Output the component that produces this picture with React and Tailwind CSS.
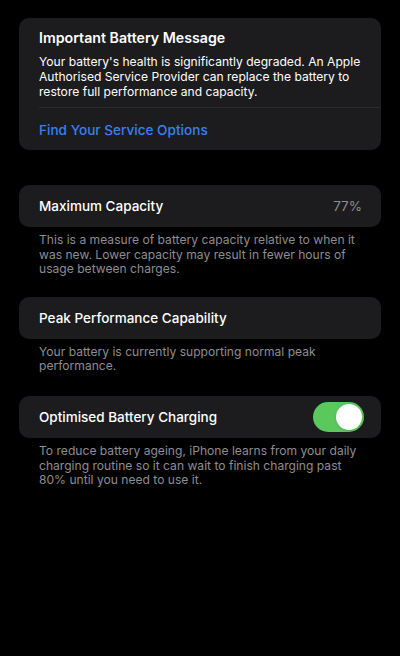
import React, { useState } from 'react';

const Toggle = ({ on, onChange }) => (
  <button
    onClick={() => onChange(!on)}
    className={`relative w-[51px] h-[30px] rounded-full ${on ? 'bg-[#5ac85c]' : 'bg-[#39393d]'}`}
  >
    <span
      className={`absolute top-[2px] w-[26px] h-[26px] rounded-full bg-white shadow ${on ? 'left-[23px]' : 'left-[2px]'}`}
    />
  </button>
);

const Row = ({ children }) => (
  <div className="mx-[19px] bg-[#1c1c1e] rounded-[10px] h-[42px] pl-[20px] pr-[17px] flex items-center justify-between text-[13.5px] font-medium text-white">
    {children}
  </div>
);

const Footer = ({ children }) => (
  <p className="mx-[19px] pl-[20px] pr-[16px] pt-[6px] text-[12.1px] leading-[14.6px] text-[#8d8d92]">{children}</p>
);

export default function App() {
  const [optimised, setOptimised] = useState(true);

  return (
    <div className="min-h-[656px] bg-black pt-[18px] pb-10 font-['Inter',sans-serif]">
      {/* Battery message */}
      <div className="mx-[19px] bg-[#1c1c1e] rounded-[10px]">
        <div className="pl-[20px] pr-[16px] pt-[10px] pb-[8px]">
          <h2 className="text-[14.2px] font-semibold text-white leading-[20px]">Important Battery Message</h2>
          <p className="mt-[6px] text-[12.1px] leading-[15px] text-white">
            Your battery's health is significantly degraded. An Apple Authorised Service Provider can replace the
            battery to restore full performance and capacity.
          </p>
        </div>
        <div className="ml-[20px] border-t border-[#2c2c2e]" />
        <div className="pl-[20px] h-[42px] pt-[3px] flex items-center text-[13.6px] font-medium text-[#3a80f0]">
          Find Your Service Options
        </div>
      </div>

      <div className="mt-[35px]">
        <Row>
          <span>Maximum Capacity</span>
          <span className="text-[#8d8d92] font-normal pr-[2px]">77%</span>
        </Row>
        <Footer>
          This is a measure of battery capacity relative to when it was new. Lower capacity may result in fewer hours
          of usage between charges.
        </Footer>
      </div>

      <div className="mt-[20px]">
        <Row>
          <span>Peak Performance Capability</span>
        </Row>
        <Footer>Your battery is currently supporting normal peak performance.</Footer>
      </div>

      <div className="mt-[22px]">
        <Row>
          <span>Optimised Battery Charging</span>
          <Toggle on={optimised} onChange={setOptimised} />
        </Row>
        <Footer>
          To reduce battery ageing, iPhone learns from your daily charging routine so it can wait to finish charging
          past 80% until you need to use it.
        </Footer>
      </div>
    </div>
  );
}
